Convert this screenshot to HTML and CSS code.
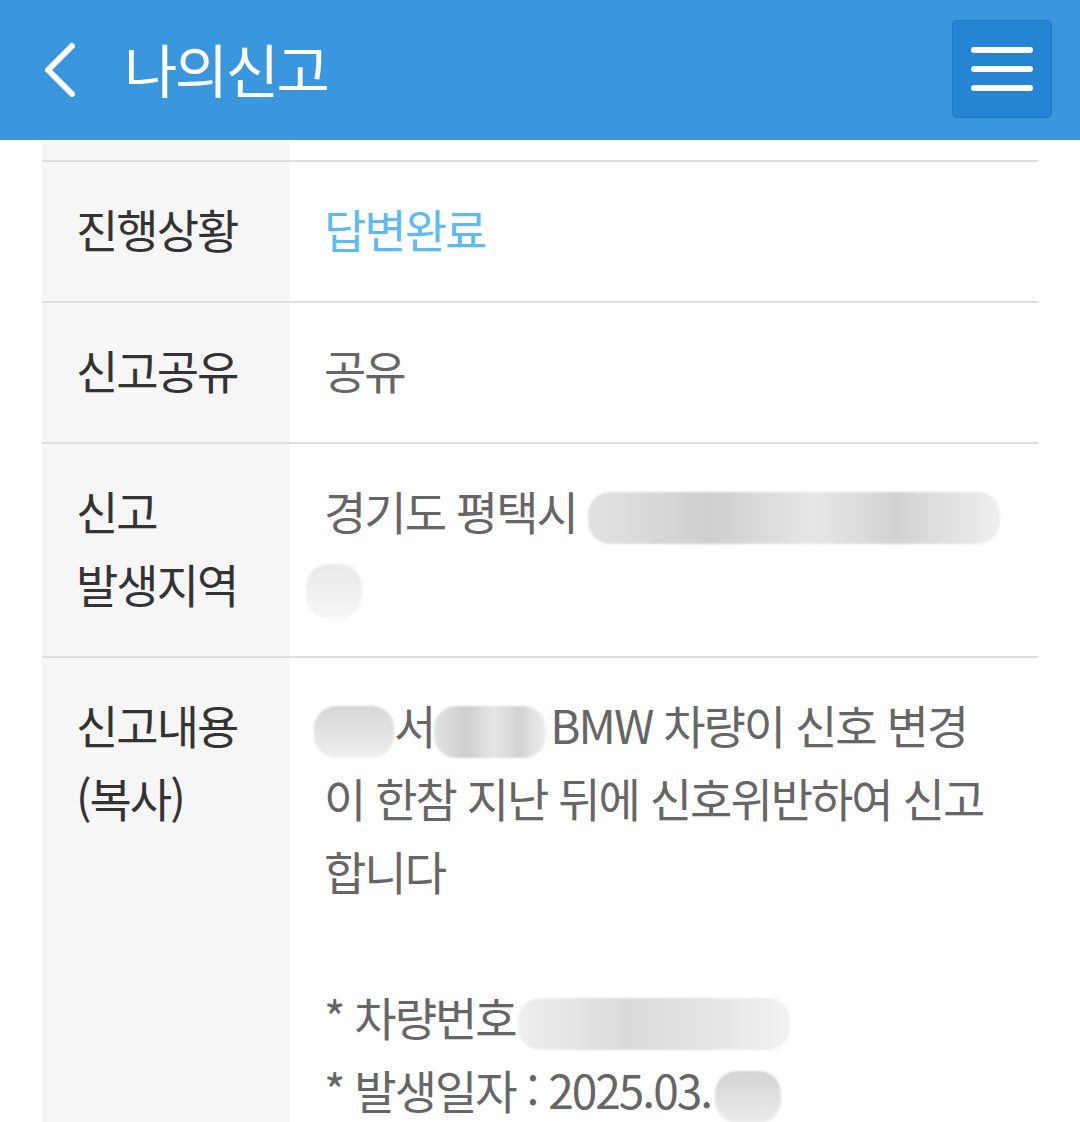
FILE: index.html
```html
<!DOCTYPE html>
<html lang="ko">
<head>
    <meta charset="UTF-8">
    <meta name="viewport" content="width=device-width, initial-scale=1.0">
    <title>나의신고</title>
    <link rel="stylesheet" href="styles.css">
</head>
<body>
    <header class="top-bar">
        <a class="back" href="#">
            <svg width="40" height="60" viewBox="0 0 40 60">
                <polyline points="32,6 8,30 32,54" fill="none" stroke="#fff" stroke-width="6" stroke-linecap="round" stroke-linejoin="round"/>
            </svg>
        </a>
        <h1 class="title">나의신고</h1>
        <button class="menu-btn" type="button">
            <span></span><span></span><span></span>
        </button>
    </header>

    <div class="report-table">
        <div class="row row-top">
            <div class="th"></div>
            <div class="td"></div>
        </div>
        <div class="row">
            <div class="th">진행상황</div>
            <div class="td status">답변완료</div>
        </div>
        <div class="row">
            <div class="th">신고공유</div>
            <div class="td">공유</div>
        </div>
        <div class="row">
            <div class="th">신고<br>발생지역</div>
            <div class="td">경기도 평택시 <span class="mask mask-addr"></span><br><span class="mask mask-small"></span></div>
        </div>
        <div class="row">
            <div class="th">신고내용<br>(복사)</div>
            <div class="td">
                <span class="mask mask-a"></span>서<span class="mask mask-b"></span>BMW 차량이 신호 변경<br>
                이 한참 지난 뒤에 신호위반하여 신고<br>
                합니다<br>
                <br>
                * 차량번호<span class="mask mask-car"></span><br>
                * 발생일자 : 2025.03.<span class="mask mask-date"></span>
            </div>
        </div>
    </div>
</body>
</html>
```

FILE: styles.css
```css
body {
    margin: 0;
    padding: 0;
    font-family: "Noto Sans CJK KR", sans-serif;
    background: #fff;
}
.top-bar {
    display: flex;
    align-items: center;
    height: 140px;
    background-color: #3a97de;
    padding: 0 28px 0 40px;
    box-sizing: border-box;
}
.back {
    display: flex;
    width: 40px;
    height: 60px;
}
.title {
    margin: -4px 0 0 44px;
    color: #fff;
    font-size: 58px;
    font-weight: 400;
    letter-spacing: -2.5px;
    flex: 1;
}
.menu-btn {
    width: 100px;
    height: 98px;
    margin-top: -2px;
    background-color: #2585d3;
    border: 1px solid #1f79c2;
    border-radius: 5px;
    display: flex;
    flex-direction: column;
    align-items: center;
    justify-content: center;
    gap: 13px;
    padding: 0;
}
.menu-btn span {
    display: block;
    width: 62px;
    height: 6px;
    border-radius: 3px;
    background: #fff;
}
.report-table {
    margin: 0 42px;
    padding-top: 2px;
}
.row {
    display: flex;
    border-top: 2px solid #dedede;
}
.row-top {
    border-top: none;
    height: 18px;
}
.th {
    width: 248px;
    flex-shrink: 0;
    background-color: #f6f6f6;
    padding: 30px 34px 36px;
    box-sizing: border-box;
    color: #333;
    font-size: 46px;
    line-height: 73px;
    letter-spacing: -2px;
}
.row-top .th,
.row-top .td {
    padding: 0;
}
.td {
    flex: 1;
    padding: 30px 34px 36px;
    color: #666;
    font-size: 46px;
    line-height: 73px;
    letter-spacing: -2px;
    white-space: nowrap;
}
.status {
    color: #5cbbf1;
}
.mask {
    display: inline-block;
    vertical-align: middle;
    height: 52px;
    border-radius: 22px;
    background: linear-gradient(90deg, #e2e2e2, #cfcfcf 30%, #e6e6e6 55%, #d2d2d2 75%, #efefef);
    filter: blur(1px);
}
.mask-addr {
    width: 412px;
}
.mask-small {
    width: 56px;
    height: 54px;
    background: linear-gradient(180deg, #eaeaea, #f6f6f6);
    margin-left: -18px;
}
.mask-a {
    width: 80px;
    margin-left: -10px;
    background: linear-gradient(180deg, #d6d6d6, #efefef);
}
.mask-b {
    width: 112px;
    margin-right: 4px;
}
.mask-car {
    width: 272px;
    margin-left: 2px;
    background: linear-gradient(90deg, #efefef, #dadada 40%, #e4e4e4 70%, #f2f2f2);
}
.mask-date {
    width: 66px;
    margin-left: 4px;
    background: linear-gradient(180deg, #d4d4d4, #ececec);
}
```
